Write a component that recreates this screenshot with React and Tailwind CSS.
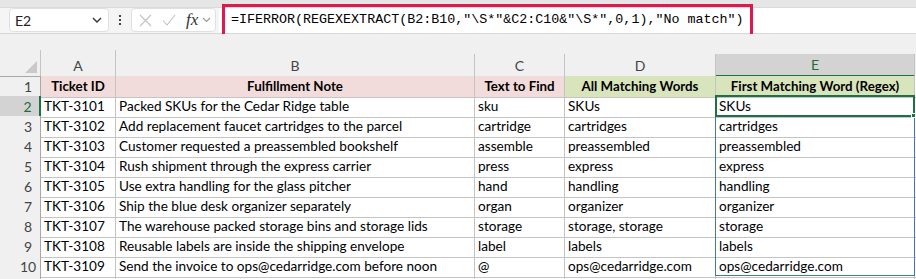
import React from "react";

const rows = [
  ["TKT-3101", "Packed SKUs for the Cedar Ridge table", "sku", "SKUs", "SKUs"],
  ["TKT-3102", "Add replacement faucet cartridges to the parcel", "cartridge", "cartridges", "cartridges"],
  ["TKT-3103", "Customer requested a preassembled bookshelf", "assemble", "preassembled", "preassembled"],
  ["TKT-3104", "Rush shipment through the express carrier", "press", "express", "express"],
  ["TKT-3105", "Use extra handling for the glass pitcher", "hand", "handling", "handling"],
  ["TKT-3106", "Ship the blue desk organizer separately", "organ", "organizer", "organizer"],
  ["TKT-3107", "The warehouse packed storage bins and storage lids", "storage", "storage, storage", "storage"],
  ["TKT-3108", "Reusable labels are inside the shipping envelope", "label", "labels", "labels"],
  ["TKT-3109", "Send the invoice to ops@cedarridge.com before noon", "@", "ops@cedarridge.com", "ops@cedarridge.com"],
];

const cols = "grid grid-cols-[41px_75px_359px_90px_151px_199px_1fr]";
const grid = "border-r border-b border-[#c4c4c4]";

export default function App() {
  return (
    <div className="w-[916px] h-[279px] overflow-hidden bg-[#f0f0f0] font-['Lato',sans-serif] text-[13.6px] text-black">
      {/* top strip */}
      <div className="h-[8px] bg-[#e6e6e6] border-b border-[#dadada]" />
      {/* formula toolbar */}
      <div className="relative h-[26px] flex items-start bg-[#f5f5f5] border-b border-[#d6d6d6]">
        <div className="ml-[9px] w-[100px] h-[24px] bg-white border border-[#e0e0e0] rounded-[4px] flex items-center justify-between pl-[5px] pr-[6px]">
          <span className="text-[14px] text-[#222]">E2</span>
          <svg width="10" height="6" viewBox="0 0 10 6"><path d="M1 1l4 4 4-4" fill="none" stroke="#333" strokeWidth="1.4" /></svg>
        </div>
        <div className="w-[22px] h-[24px] flex flex-col items-center justify-center gap-[2px]">
          <div className="w-[2px] h-[2px] bg-[#444]" />
          <div className="w-[2px] h-[2px] bg-[#444]" />
          <div className="w-[2px] h-[2px] bg-[#444]" />
        </div>
        <div className="w-[85px] h-[24px] bg-white border border-[#e0e0e0] rounded-[4px] flex items-center pl-[7px] gap-[10px]">
          <svg width="13" height="13" viewBox="0 0 13 13"><path d="M1 1l11 11M12 1L1 12" stroke="#c2c2c2" strokeWidth="1.1" /></svg>
          <svg width="14" height="12" viewBox="0 0 14 12"><path d="M1 6.5l4 4.5L13 1" fill="none" stroke="#c2c2c2" strokeWidth="1.1" /></svg>
          <span className="font-['Liberation_Serif',serif] italic text-[17px] leading-none text-[#333] -mt-[2px]">fx</span>
          <svg className="-ml-[6px]" width="9" height="6" viewBox="0 0 9 6"><path d="M1 1l3.5 3.5L8 1" fill="none" stroke="#9a9a9a" strokeWidth="1.1" /></svg>
        </div>
        <div className="ml-[3px] flex-1 h-[25px] bg-white flex items-center pl-[12px] font-['Liberation_Mono',monospace] text-[13.35px] text-black">
          =IFERROR(REGEXEXTRACT(B2:B10,"\S*"&amp;C2:C10&amp;"\S*",0,1),"No match")
        </div>
        <div className="absolute left-[222px] top-[-4px] w-[531px] h-[33px] border-[3px] border-[#e3174f] pointer-events-none" />
      </div>
      {/* gap strip */}
      <div className="h-[20px] bg-[#f0f0f0] relative">
        <div className="absolute left-[40px] top-[16px] w-px h-[4px] bg-[#c4c4c4]" />
        <div className="absolute left-[115px] top-[16px] w-px h-[4px] bg-[#c4c4c4]" />
      </div>
      {/* sheet */}
      <div className="relative">
        {/* column headers */}
        <div className={`${cols} h-[22px] text-[14px] text-[#444]`}>
          <div className={`${grid} border-b-[#a8a8a8] flex items-end justify-end pr-[3px] pb-[3px]`}>
            <svg width="12" height="12" viewBox="0 0 12 12"><path d="M12 0L12 12L0 12Z" fill="#c9c9c9" /></svg>
          </div>
          {["A", "B", "C", "D"].map((c) => (
            <div key={c} className={`${grid} border-b-[#a8a8a8] flex items-center justify-center`}>{c}</div>
          ))}
          <div className="border-r border-[#c4c4c4] border-b-2 border-b-[#1e7145] bg-[#d3d3d3] text-[#1e6b3e] flex items-center justify-center">E</div>
          <div className="border-b border-[#a8a8a8]" />
        </div>
        {/* row 1 */}
        <div className={`${cols} h-[20px] font-bold text-[13.3px]`}>
          <div className={`${grid} border-r-[#a8a8a8] flex items-center justify-center pl-[16px] font-normal text-[14px] text-[#444]`}>1</div>
          <div className={`${grid} bg-[#f2dcdb] flex items-center justify-center`}>Ticket ID</div>
          <div className={`${grid} bg-[#f2dcdb] flex items-center justify-center`}>Fulfillment Note</div>
          <div className={`${grid} bg-[#f2dcdb] flex items-center justify-center`}>Text to Find</div>
          <div className={`${grid} bg-[#d8e4bc] flex items-center justify-center`}>All Matching Words</div>
          <div className={`${grid} bg-[#d8e4bc] flex items-center justify-center whitespace-nowrap`}>First Matching Word (Regex)</div>
          <div className="border-b border-[#c4c4c4] bg-white" />
        </div>
        {rows.map((r, i) => (
          <div key={i} className={`${cols} h-[20px] bg-white`}>
            {i === 0 ? (
              <div className="border-b border-[#c4c4c4] border-r-2 border-r-[#1e7145] bg-[#d3d3d3] flex items-center justify-center pl-[16px] text-[14px] text-[#1e6b3e]">{i + 2}</div>
            ) : (
              <div className={`${grid} border-r-[#a8a8a8] bg-[#f0f0f0] flex items-center justify-center pl-[16px] text-[14px] text-[#444]`}>{i + 2}</div>
            )}
            {r.map((v, j) => (
              <div key={j} className={`${grid} flex items-center pl-[3px] whitespace-nowrap overflow-hidden`}>{v}</div>
            ))}
            <div className="border-b border-[#c4c4c4]" />
          </div>
        ))}
        <div className={`${cols} h-[10px] bg-white`}>
          <div className="border-r border-[#a8a8a8] bg-[#f0f0f0]" />
          <div className="border-r border-[#c4c4c4]" />
          <div className="border-r border-[#c4c4c4]" />
          <div className="border-r border-[#c4c4c4]" />
          <div className="border-r border-[#c4c4c4]" />
          <div className="border-r border-[#c4c4c4]" />
          <div />
        </div>
        {/* spill range border */}
        <div className="absolute left-[715px] top-[41px] w-[200px] h-[181px] border border-[#4472c4] pointer-events-none" />
        {/* active cell */}
        <div className="absolute left-[715px] top-[41px] w-[200px] h-[22px] border-2 border-[#1e7145] pointer-events-none" />
        <div className="absolute left-[911px] top-[59px] w-[5px] h-[5px] bg-[#1e7145] border border-white pointer-events-none" />
      </div>
    </div>
  );
}
